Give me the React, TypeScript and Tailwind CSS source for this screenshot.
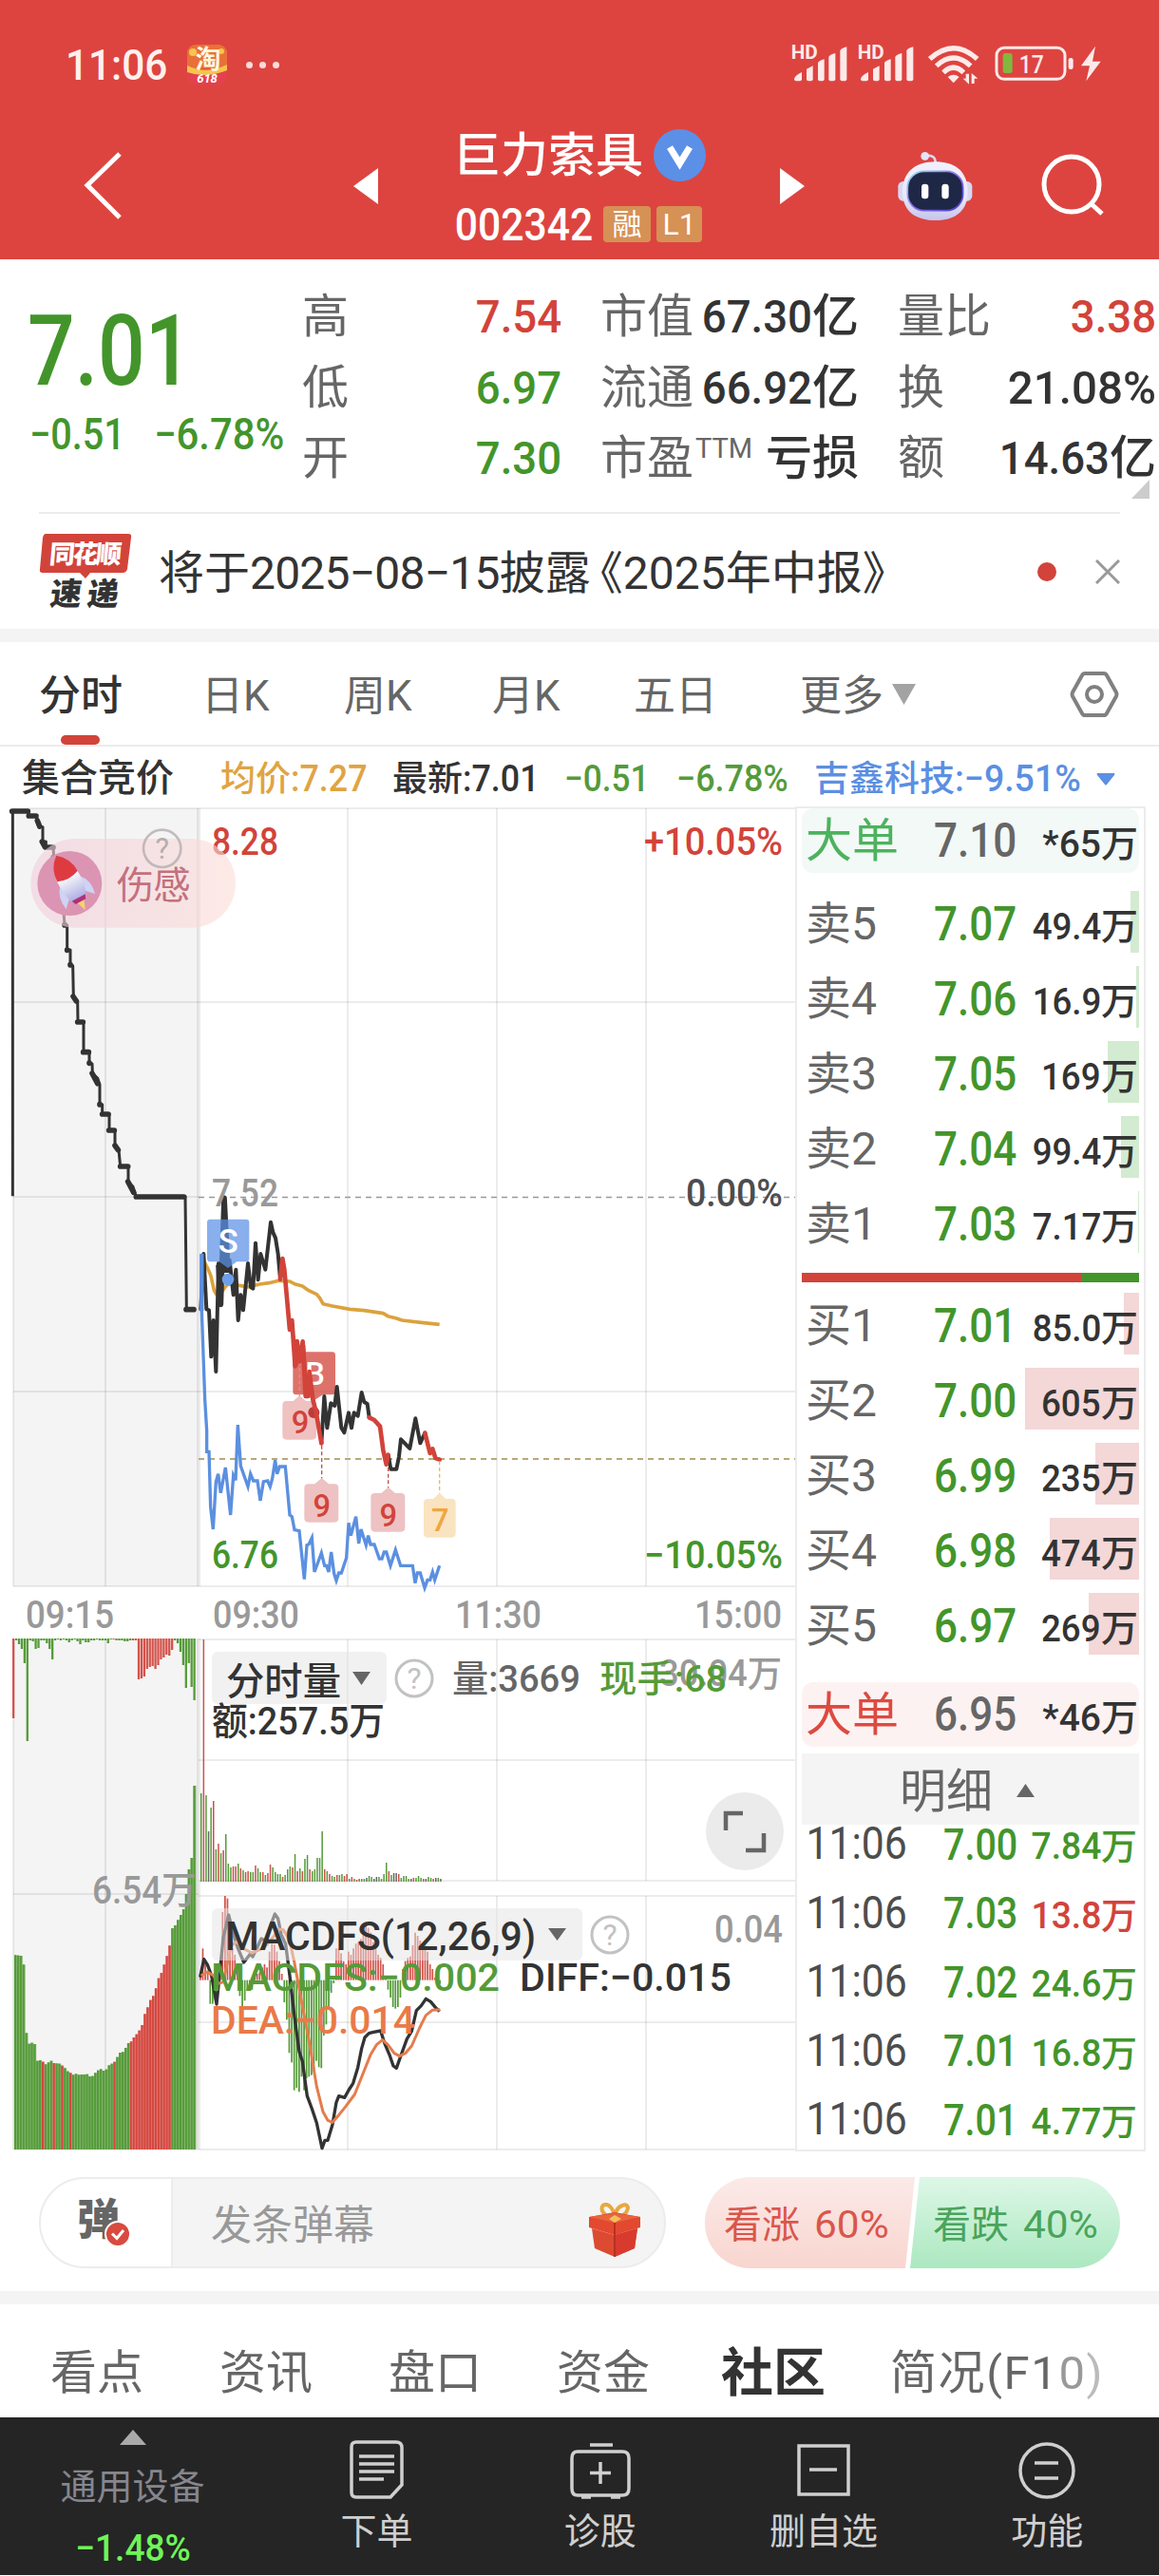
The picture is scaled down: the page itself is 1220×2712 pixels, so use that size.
import type { ReactNode } from 'react'
import clsx from 'clsx'

const GREEN = '#43952b'
const RED = '#d2433a'
const DARK = '#333333'
const GRAY = '#999999'

const stats = [
  [
    { label: '高', value: '7.54', unit: '', tone: 'text-[#d2433a]' },
    { label: '低', value: '6.97', unit: '', tone: 'text-[#43952b]' },
    { label: '开', value: '7.30', unit: '', tone: 'text-[#43952b]' },
  ],
  [
    { label: '市值', value: '67.30', unit: '亿', tone: 'text-[#333333]' },
    { label: '流通', value: '66.92', unit: '亿', tone: 'text-[#333333]' },
    { label: '市盈', sup: 'TTM', value: '', unit: '亏损', tone: 'text-[#333333]' },
  ],
  [
    { label: '量比', value: '3.38', unit: '', tone: 'text-[#d2433a]' },
    { label: '换', value: '21.08%', unit: '', tone: 'text-[#333333]' },
    { label: '额', value: '14.63', unit: '亿', tone: 'text-[#333333]' },
  ],
]

const sells = [
  { label: '卖5', price: '7.07', volume: '49.4', bar: 9 },
  { label: '卖4', price: '7.06', volume: '16.9', bar: 3 },
  { label: '卖3', price: '7.05', volume: '169', bar: 33 },
  { label: '卖2', price: '7.04', volume: '99.4', bar: 19 },
  { label: '卖1', price: '7.03', volume: '7.17', bar: 1 },
]

const buys = [
  { label: '买1', price: '7.01', volume: '85.0', bar: 16 },
  { label: '买2', price: '7.00', volume: '605', bar: 120 },
  { label: '买3', price: '6.99', volume: '235', bar: 46 },
  { label: '买4', price: '6.98', volume: '474', bar: 94 },
  { label: '买5', price: '6.97', volume: '269', bar: 53 },
]

const trades = [
  { time: '11:06', price: '7.00', volume: '7.84', up: false },
  { time: '11:06', price: '7.03', volume: '13.8', up: true },
  { time: '11:06', price: '7.02', volume: '24.6', up: false },
  { time: '11:06', price: '7.01', volume: '16.8', up: false },
  { time: '11:06', price: '7.01', volume: '4.77', up: false },
]

// Call auction: unmatched volume hanging from the top, [height, isRed]
const auctionTop: [number, number][] = [
  [84, 1], [2, 0], [6, 0], [11, 0], [26, 0], [108, 0], [2, 0], [3, 0], [11, 0], [10, 0],
  [2, 0], [2, 0], [5, 0], [11, 0], [22, 0], [2, 0], [1, 0], [2, 0], [1, 0], [2, 0],
  [4, 0], [2, 0], [1, 0], [3, 0], [6, 0], [2, 0], [4, 0], [4, 0], [2, 0], [2, 0],
  [1, 0], [2, 0], [2, 0], [2, 0], [5, 0], [1, 0], [1, 1], [2, 0], [2, 0], [2, 0],
  [3, 0], [3, 0], [2, 0], [2, 1], [2, 1], [43, 1], [42, 1], [40, 1], [32, 1], [30, 1],
  [29, 1], [32, 1], [28, 1], [22, 1], [20, 1], [17, 1], [18, 1], [12, 1], [2, 0], [5, 0],
  [14, 0], [28, 0], [52, 0], [26, 0], [51, 0], [65, 0],
]

// Call auction: matched volume, y of each bar top
const auctionMatched = [
  295, 296, 297, 325, 541, 575, 572, 576, 629, 627, 632, 640, 634, 629, 636, 637, 638, 644, 652,
  662, 667, 673, 670, 673, 672, 672, 671, 678, 677, 667, 659, 655, 660, 656, 643, 638, 632, 617,
  603, 601, 588, 573, 568, 555, 545, 533, 516, 481, 460, 437, 424, 400, 368, 351, 325, 298, 265,
  210, 201, 184, 168, 150, 102, 24, -12, -240,
]
const isMatchedRed = (i: number) => [10, 14, 17, 20, 36].includes(i) || (i >= 42 && i <= 56)

// Minute volume bars: height followed by g(reen) / r(ed) / k (flat)
const minuteVolume =
  '93g 255r 91g 53k 78g 85r 34g 40r 30g 33r 50g 19g 15g 16r 16r 19g 14r 12g 10r 11r 10g 10g 17r 14g 10g 10r 7g 9r 18r 15g 10g 8g 8g 5r 7g 13g 16g 15r 29g 11r 14g 11r 24g 28g 13r 11g 13g 25g 25g 53g 13r 11g 8r 6g 5g 7r 7g 8g 6r 8r 3g 5r 3g 2r 3r 3g 3g 4k 6g 5g 3k 5k 5g 3g 8g 20g 11r 7g 9k 9k 8r 4g 6g 6g 3g 3k 4r 4g 6g 4g 3r 3k 5g 4g 3r 4k 4g 3k'
    .split(' ')
    .map((s) => ({ h: parseInt(s, 10), c: s.slice(-1) }))

const macdBars = [
  20, 100, 60, 30, -75, -75, -60, -40, 10, 215, 266, 258, 150, 100, 80, 40, -50, -90, -65, -30, -20,
  -30, 10, 20, 25, 40, 50, 40, 90, 115, 112, 90, 60, 20, -70, -125, -230, -260, -348, -340, -353,
  -305, -348, -310, -305, -300, -290, -255, -275, -278, -175, -140, -90, -40, -10, 100, 100, 85, 60,
  50, 90, 80, 100, 115, 120, 130, 160, 178, 165, 150, 120, 100, 80, 70, 50, 5, -30, -55, -85, -90,
  -85, -55, 35, 60, 70, 75, 110, 150, 140, 125, 115, 110, 90, 50, 35, 8, -5, -12,
]

/** Narrow figures */
const Num = ({ children, className }: { children: ReactNode; className?: string }) => (
  <span className={clsx('inline-block whitespace-nowrap', className)}>{children}</span>
)

type LabelProps = {
  x: number
  y: number
  w: number
  size?: number
  fill?: string
  weight?: number
  children: string
}

/** Chart text stretched to a known width */
const Label = ({ x, y, w, size = 40, fill = GRAY, weight = 500, children }: LabelProps) => (
  <text
    x={x}
    y={y}
    textLength={w}
    lengthAdjust="spacingAndGlyphs"
    fontSize={size}
    fontWeight={weight}
    fill={fill}
  >
    {children}
  </text>
)

const StatusBar = () => (
  <div className="flex h-[136px] items-center pl-[69px] text-[#fff0ee]">
    <Num className="w-[128px] origin-left scale-x-[0.94] text-[45px] leading-none font-medium">11:06</Num>
    <svg width="42" height="42" viewBox="0 0 42 42" className="shrink-0">
      <rect width="42" height="42" rx="9" fill="#e8543a" />
      <path d="M0 9A9 9 0 0 1 9 0H33A9 9 0 0 1 42 9V28Q20 20 0 30Z" fill="#e8713a" />
      <circle cx="6" cy="8" r="4" fill="#f6c54c" />
      <circle cx="36" cy="7" r="3" fill="#f6c54c" />
      <path d="M0 27Q20 34 42 25V33A9 9 0 0 1 33 42H9A9 9 0 0 1 0 33Z" fill="#e5404f" />
      <path d="M0 22Q20 32 42 21V27Q20 36 0 29Z" fill="#f6c54c" />
      <text x="22" y="25" fontSize="27" fontWeight="700" fill="#fff6df" textAnchor="middle">淘</text>
      <text x="21" y="40" fontSize="13" fontWeight="700" fontStyle="italic" fill="#fff" textAnchor="middle">618</text>
    </svg>
    <div className="ml-[20px] flex gap-[7px]">
      <i className="size-[7px] rounded-full bg-[#fbdcda]" />
      <i className="size-[7px] rounded-full bg-[#fbdcda]" />
      <i className="size-[7px] rounded-full bg-[#fbdcda]" />
    </div>
    <svg width="330" height="44" viewBox="40 48 990 132" className="ml-[538px] shrink-0" fill="#fdeae9">
      {[0, 210].map((dx) => (
        <g key={dx} transform={`translate(${dx} 0)`}>
          <text x="42" y="97" fontSize="58" fontWeight="700" textLength="84" lengthAdjust="spacingAndGlyphs">HD</text>
          <path d="M52 160Q54 148 76 138V160Q76 166 70 166H58Q52 166 52 160Z" />
          <path d="M91 128L111 118V160Q111 166 105 166H97Q91 166 91 160Z" />
          <path d="M127 108Q130 102 147 97V160Q147 166 141 166H133Q127 166 127 160Z" />
          <path d="M161 90Q164 82 182 78V160Q182 166 176 166H167Q161 166 161 160Z" />
          <path d="M197 70Q200 62 218 58V160Q218 166 212 166H203Q197 166 197 160Z" />
        </g>
      ))}
      <g fill="none" stroke="#fdeae9" strokeWidth="16">
        <path d="M480 96Q555 28 630 96" />
        <path d="M501 118Q555 68 609 118" />
        <path d="M523 139Q555 108 587 139" />
      </g>
      <path d="M537 153Q555 140 573 153L555 172Z" />
      <path d="M594 143H604V176L585 158H594ZM612 174V141L632 158H621V174Z" />
      <rect x="691" y="61" width="216" height="99" rx="24" fill="none" stroke="#fdeae9" strokeWidth="9" />
      <rect x="711" y="78" width="30" height="63" rx="8" fill="#83b73e" />
      <text x="762" y="140" fontSize="80" fontWeight="500" textLength="78" lengthAdjust="spacingAndGlyphs">17</text>
      <rect x="918" y="93" width="15" height="36" rx="7" />
      <path d="M1003 56L958 118H985L974 166L1020 104H994Z" />
    </svg>
  </div>
)

const Robot = () => (
  <svg width="80" height="74" viewBox="368 378 240 222" className="ml-[97px] shrink-0">
    <defs>
      <linearGradient id="shell" x1="0" y1="0" x2="0" y2="1">
        <stop offset="0" stopColor="#f2f0fc" />
        <stop offset=".6" stopColor="#e9e8fa" />
        <stop offset="1" stopColor="#c6c3ec" />
      </linearGradient>
      <linearGradient id="rim" x1="0" y1="0" x2="1" y2="1">
        <stop offset="0" stopColor="#8fe0ec" />
        <stop offset=".5" stopColor="#8a6fe8" />
        <stop offset="1" stopColor="#4a3fd0" />
      </linearGradient>
    </defs>
    <path d="M458 394Q492 386 490 420" fill="none" stroke="#d9d7f3" strokeWidth="8" />
    <circle cx="457" cy="394" r="13" fill="#e6e4f8" />
    <rect x="372" y="474" width="36" height="62" rx="16" fill="#d9d8f2" />
    <rect x="570" y="474" width="36" height="62" rx="16" fill="#d9d8f2" />
    <path d="M490 412C560 412 592 450 592 506C592 570 550 597 490 597C430 597 386 570 386 506C386 450 420 412 490 412Z" fill="url(#shell)" />
    <rect x="402" y="442" width="175" height="124" rx="52" fill="#1f2747" stroke="url(#rim)" strokeWidth="5" />
    <rect x="446" y="482" width="22" height="47" rx="10" fill="#fff" />
    <rect x="510" y="482" width="22" height="47" rx="10" fill="#fff" />
  </svg>
)

const TitleBar = () => (
  <div className="flex h-[119px] items-center">
    <svg width="46" height="74" viewBox="0 0 46 74" className="ml-[86px] shrink-0" fill="none" stroke="#fff" strokeWidth="5">
      <path d="M40 3L6 36L40 70" />
    </svg>
    <svg width="26" height="38" viewBox="0 0 26 38" className="ml-[240px] shrink-0" fill="#fff">
      <path d="M26 0V38L0 19Z" />
    </svg>
    <div className="ml-[79px] flex w-[268px] flex-col gap-[27px] text-white">
      <div className="flex h-[54px] items-center gap-[11px]">
        <span className="pt-0.5 text-[50px] leading-none font-medium whitespace-nowrap">巨力索具</span>
        <svg width="55" height="55" viewBox="0 0 55 55" className="shrink-0">
          <circle cx="27.500" cy="27.500" r="27.500" fill="#5b90e6" />
          <path d="M17 19L27.500 36L38 19" fill="none" stroke="#fff" strokeWidth="7" />
        </svg>
      </div>
      <div className="flex h-[38px] items-center gap-1.5">
        <Num className="w-[152px] origin-left scale-x-[0.87] pl-[2px] text-[49px] leading-none font-medium">002342</Num>
        <span className="flex h-[38px] w-[50px] shrink-0 items-center justify-center rounded-[4px] bg-[#d69155] text-[31px] leading-none">融</span>
        <span className="flex h-[38px] w-[48px] shrink-0 items-center justify-center rounded-[4px] bg-[#d69155] text-[32px] leading-none">L1</span>
      </div>
    </div>
    <svg width="26" height="38" viewBox="0 0 26 38" className="ml-[76px] shrink-0" fill="#fff">
      <path d="M0 0V38L26 19Z" />
    </svg>
    <Robot />
    <svg width="68" height="68" viewBox="0 0 68 68" className="ml-[72px] shrink-0" fill="none" stroke="#fff" strokeWidth="5">
      <circle cx="32" cy="32" r="29" />
      <path d="M52 52L64 63" />
    </svg>
  </div>
)

const Quote = () => (
  <div className="flex h-[266px] pl-[31px]">
    <div className="w-[288px] shrink-0 pt-[53px] font-medium text-[#43952b]">
      <div className="text-[103px] leading-[88px]">
        <Num className="-ml-0.5 origin-left scale-x-[0.85]">7.01</Num>
      </div>
      <div className="mt-[19px] flex text-[46px] leading-[48px]">
        <Num className="w-[131px] origin-left scale-x-[0.86]">−0.51</Num>
        <Num className="origin-left scale-x-[0.91]">−6.78%</Num>
      </div>
    </div>
    <div className="mt-[23px] flex gap-[42px]">
      {stats.map((col, i) => (
        <div key={i} className={clsx('flex flex-col', i === 0 ? 'w-[272px]' : 'w-[271px]')}>
          {col.map((s) => (
            <div key={s.label} className="-ml-px flex h-[74.7px] items-center justify-between text-[49px] leading-none whitespace-nowrap">
              <span className="text-[#666666]">
                {s.label}
                {s.sup && <sup className="top-[-0.6em] ml-0.5 text-[29px] leading-none">{s.sup}</sup>}
              </span>
              <span className={clsx('font-medium', s.tone)}>
                <Num className={clsx('origin-right', s.value.endsWith('%') ? 'scale-x-[0.97]' : 'scale-x-[0.93]')}>{s.value}</Num>
                {s.unit}
              </span>
            </div>
          ))}
        </div>
      ))}
    </div>
  </div>
)

const Notice = () => (
  <div className="relative mx-[41px] flex h-[123px] items-center border-t-2 border-[#ececec]">
    <svg width="19" height="20" viewBox="0 0 19 20" className="absolute top-[-36px] right-[-31px]" fill="#ccc">
      <path d="M19 0V20H0Z" />
    </svg>
    <svg width="98" height="80" viewBox="0 0 98 80" className="shrink-0 overflow-visible">
      <path d="M7 0H94Q98 0 97 4L93 37Q92 41 88 41H54L49 47L43 41H4Q0 41 1 37L4 4Q5 0 7 0Z" fill="#d2433a" />
      <text x="11" y="31" fontSize="27" fontWeight="900" fill="#fff" textLength="76" transform="skewX(-5) translate(2 0)">同花顺</text>
      <text x="12" y="75" fontSize="33" fontWeight="900" fill="#333" textLength="72" transform="skewX(-7) translate(8 0)">速递</text>
    </svg>
    <p className="ml-[28px] pt-1 text-[48px] leading-none whitespace-nowrap text-[#333333]">
      将于
      <span className="tracking-[-0.8px]">2025−08−15</span>
      披露<span className="-ml-[14px]">《2025年中报》</span>
    </p>
    <i className="absolute right-[67px] size-[20px] rounded-full bg-[#d2433a]" />
    <svg width="26" height="26" viewBox="0 0 26 26" className="absolute right-0" stroke="#999" strokeWidth="3">
      <path d="M1 1L25 25M25 1L1 25" />
    </svg>
  </div>
)

const PeriodTabs = () => (
  <div className="relative h-[110px] border-b-2 border-[#ececec] text-[44px] leading-[114px] text-[#666666]">
    <div className="grid grid-cols-[171px_150px_156px_149px_175px_1fr] pl-[41px]">
      <span className="font-medium text-[#333333]">分时</span>
      <span>日K</span>
      <span>周K</span>
      <span>月K</span>
      <span>五日</span>
      <span className="flex items-center">
        更多
        <svg width="25" height="22" viewBox="0 0 25 22" className="mb-1 ml-[9px]" fill="#a3a3a3">
          <path d="M0 0H25L12.500 22Z" />
        </svg>
      </span>
    </div>
    <i className="absolute bottom-0 left-[64px] h-[10px] w-[41px] rounded-full bg-[#d2433a]" />
    <svg width="54" height="52" viewBox="0 0 54 52" className="absolute top-[29px] right-[41px]" fill="none" stroke="#808080" strokeWidth="4">
      <path d="M17 4H37Q39 4 40 6L50 24Q51 26 50 28L40 46Q39 48 37 48H17Q15 48 14 46L4 28Q3 26 4 24L14 6Q15 4 17 4Z" />
      <circle cx="27" cy="26" r="8" />
    </svg>
  </div>
)

const InfoRow = () => (
  <div className="grid h-[63px] grid-cols-[209px_181px_181px_118px_145px_1fr] items-center pt-[5px] pl-[23px] text-[37px] leading-none font-medium whitespace-nowrap text-[#333333]">
    <span className="text-[40px]">集合竞价</span>
    <span className="text-[#dfa443]">均价<Num className="origin-left scale-x-[0.92] text-[39px]">:7.27</Num></span>
    <span>最新<Num className="origin-left scale-x-[0.92] text-[39px]">:7.01</Num></span>
    <Num className="origin-left scale-x-[0.9] text-[39px] text-[#559a3a]">−0.51</Num>
    <Num className="origin-left scale-x-[0.92] text-[39px] text-[#559a3a]">−6.78%</Num>
    <span className="flex items-center text-[#5b8fe2]">
      吉鑫科技<Num className="w-[149px] origin-left scale-x-[0.96] text-[39px]">:−9.51%</Num>
      <svg width="20" height="13" viewBox="0 0 20 13" fill="#5b8fe2">
        <path d="M1 0H19Q20 1 19 2L11 12Q10 13 9 12L1 2Q0 1 1 0Z" />
      </svg>
    </span>
  </div>
)

const HelpIcon = ({ cx, cy }: { cx: number; cy: number }) => (
  <g>
    <circle cx={cx} cy={cy} r="19" fill="none" stroke="#c2c2c2" strokeWidth="3" />
    <text x={cx} y={cy + 11} fontSize="32" fill="#c2c2c2" textAnchor="middle">?</text>
  </g>
)

const Grid = () => (
  <g stroke="#000" strokeOpacity=".075" strokeWidth="2">
    <rect x="14" y="851" width="195" height="819" fill="#f4f4f4" stroke="none" />
    <rect x="14" y="1725" width="195" height="539" fill="#f4f4f4" stroke="none" />
    <path d="M14 851H837M14 1670H837M209 1726H837M209 1980H837M209 1996H837M209 2263H837" />
    <path d="M14 1055H837M14 1260H209M14 1465H837M209 1853H837M209 2129H837M14 1994H209" />
    <path d="M14 851V1670M111 851V1670M14 1725V2263M111 1725V2263" />
    <path d="M209 851V1670M209 1725V2263" strokeWidth="4" />
    <path d="M366 851V1670M523 851V1670M680 851V1670" />
    <path d="M366 1726V1980M523 1726V1980M680 1726V1980M366 1996V2263M523 1996V2263M680 1996V2263" />
  </g>
)

const PriceChart = () => (
  <g strokeLinejoin="round" fill="none">
    <path d="M209 1260.500H837" stroke={GRAY} strokeWidth="1.500" strokeDasharray="6 5" />
    <path d="M209 1536H837" stroke="#b9a878" strokeWidth="1.800" strokeDasharray="6 5" />

    {/* call auction steps */}
    <g transform="translate(0 840) scale(.33333)" stroke={DARK} strokeWidth="9">
      <path d="M40 1258V42H88L92 57H115L118 75L125 90L135 92V138H145V156H168L170 185L188 190L204 400L212 402V480H222V528L230 530L232 627L245 642L246 707H264V803H282V837L291 840L292 870L308 885L315 905V968H323V998H345V1049H363V1098L375 1112L380 1164H405V1212L420 1228L430 1260H585L589 1616" />
      <path
        d="M38 42H88M91 57H114M118 72L125 90M133 138L143 156H168M168 188H186M204 400V402M212 480V481M222 527V528M231 627L241 642M245 708H262M263 803H280M282 837V838M291 870L308 902M315 968V969M323 999H342M344 1050H361M363 1098L373 1112M380 1164H404M404 1212L422 1246M430 1260H581M588 1616H612"
        strokeWidth="17"
        strokeLinecap="round"
      />
    </g>

    <g transform="translate(190 1240) scale(.33333)">
      {/* buy point sits below the price line */}
      <path d="M365 550H479Q489 550 489 560V675Q489 685 479 685H450L422 703L395 685H365Q355 685 355 675V560Q355 550 365 550Z" fill={RED} fillOpacity=".75" />
      <text x="425" y="655" fontSize="98" fontWeight="500" fill="#fff" textAnchor="middle">B</text>
      <path d="M376 580V690" stroke="#e58a86" strokeWidth="4" strokeDasharray="12 8" />
      <path d="M376 687L396 705H416Q429 705 429 718V814Q429 827 416 827H335Q322 827 322 814V718Q322 705 335 705H356Z" fill="#e9a7a6" fillOpacity=".7" />
      <circle cx="421" cy="741" r="18" fill="#bb3d38" />

      <path d="M70 255L86 286L96 310L106 355L113 368L130 360L145 340L155 335L175 338L213 345L250 336L280 332L310 325L345 327L360 335L385 342L405 356L430 368L440 380L450 398L480 405L535 415L580 419L640 428L655 437L680 443L700 450L760 457L818 463" stroke="#dba23d" strokeWidth="11" />
      <path d="M64 415L73 240L82 415L90 418L97 565L104 450L112 612L120 270L127 400L138 64L150 290L155 260L167 370L175 290L182 450L190 370L198 418L213 270L222 345L229 350L237 206L245 322L253 240L268 290L285 140L292 172L300 190L308 240L315 320M445 838L454 690L463 790L475 712L487 720L494 660L508 790L517 805L531 742L540 790L548 742L560 752L572 678L580 708L590 714L596 757M656 875L664 920H682L690 880L696 826L708 838L724 855L742 760L757 838L772 806" stroke={DARK} strokeWidth="12" strokeLinecap="round" />
      <path d="M120 275L127 400L138 64L147 240V300" stroke={DARK} strokeWidth="17" />
      <path d="M315 320L322 255L328 290L345 480L352 450L362 595L368 516L376 580L386 517L395 690H402L407 612L418 700L428 740L445 838M596 757L612 765L630 785L640 860L650 905L656 875M772 806L788 870L796 856L805 885L818 890" stroke={RED} strokeWidth="14" strokeLinecap="round" />
      <path d="M356 500L366 590L388 530L398 680" stroke={RED} strokeWidth="12" />
      <path d="M67 240V420L77 700L83 800V865H90L95 1040L103 1110L112 960L119 935L127 995L142 915L158 1065L167 940L174 955L181 780L190 910L213 975L221 935L230 957H243L252 1020L262 960L275 957L283 975L290 950L299 892L305 935L313 912H331L345 1065L352 1070L360 1112L375 1115L391 1268L399 1160L405 1158L415 1137L423 1245L445 1185L455 1225H461L468 1245L476 1182L485 1250L492 1272L500 1248H508L524 1200L531 1090L538 1130L554 1070L563 1155L570 1110L586 1160L593 1130L600 1158H612L628 1203H636L643 1182H650L663 1225L679 1175L695 1225H733L741 1280L748 1248H757L771 1295L780 1270H788L796 1245L803 1270L818 1225" stroke="#5b90e0" strokeWidth="10" strokeLinejoin="miter" />
      <path d="M67 240V420" stroke="#5b90e0" strokeWidth="13" />

      <path d="M94 131H207Q217 131 217 141V255Q217 265 207 265H178L150 285L122 265H94Q84 265 84 255V141Q84 131 94 131Z" fill="#5b90e5" fillOpacity=".72" />
      <text x="151" y="236" fontSize="104" fill="#fff" fontWeight="500" textAnchor="middle">S</text>
      <circle cx="150" cy="321" r="19" fill="#6c9eea" />

      <g strokeWidth="4" strokeDasharray="12 8">
        <path d="M446 845V950M656 915V980" stroke="#c0504c" />
        <path d="M818 895V998" stroke="#edb55c" />
      </g>
      <path d="M446 948L468 967H486Q499 967 499 980V1075Q499 1088 486 1088H404Q391 1088 391 1075V980Q391 967 404 967H424Z" fill="#eec2c2" />
      <path d="M656 977L678 996H696Q709 996 709 1009V1105Q709 1118 696 1118H614Q601 1118 601 1105V1009Q601 996 614 996H634Z" fill="#eec2c2" />
      <path d="M818 995L838 1014H856Q869 1014 869 1027V1123Q869 1136 856 1136H781Q768 1136 768 1123V1027Q768 1014 781 1014H798Z" fill="#fae3c0" />
      <g fontSize="98" fontWeight="500" textAnchor="middle" fill={RED}>
        <text x="378" y="808">9</text>
        <text x="446" y="1070">9</text>
        <text x="656" y="1100">9</text>
        <text x="820" y="1117" fill="#eda740">7</text>
      </g>
    </g>

    <Label x={223} y={900} w={70} fill={RED}>8.28</Label>
    <Label x={678} y={900} w={146} fill={RED}>+10.05%</Label>
    <Label x={223} y={1270} w={70}>7.52</Label>
    <Label x={722} y={1270} w={102} fill="#4d4d4d">0.00%</Label>
    <Label x={223} y={1651} w={70} fill={GREEN}>6.76</Label>
    <Label x={678} y={1651} w={146} fill={GREEN}>−10.05%</Label>
    <Label x={27} y={1714} w={93}>09:15</Label>
    <Label x={224} y={1714} w={91}>09:30</Label>
    <Label x={479} y={1714} w={91}>11:30</Label>
    <Label x={731} y={1714} w={92}>15:00</Label>
  </g>
)

const MoodBadge = () => (
  <g transform="translate(0 840) scale(.33333)">
    <defs>
      <linearGradient id="mood">
        <stop offset="0" stopColor="#f2cddc" />
        <stop offset="1" stopColor="#fbdcd6" />
      </linearGradient>
      <linearGradient id="rocket" x1="0" y1="0" x2="0" y2="1">
        <stop offset="0" stopColor="#ffffff" />
        <stop offset="1" stopColor="#a9a9e0" />
      </linearGradient>
    </defs>
    <rect x="97" y="129" width="647" height="281" rx="140" fill="url(#mood)" fillOpacity=".6" />
    <circle cx="220" cy="270" r="102" fill="#dc94b3" />
    <g transform="rotate(-28 220 262)">
      <path d="M206 325L220 368L236 325Z" fill="#f6d36a" />
      <path d="M186 262Q160 290 168 336L192 312ZM254 262Q282 290 272 336L248 312Z" fill="#cfd3f4" />
      <path d="M184 240Q180 290 196 330H244Q262 290 256 240Z" fill="url(#rocket)" />
      <path d="M184 246Q184 200 220 172Q256 200 257 246Q220 262 184 246Z" fill="#de3b41" />
      <path d="M196 322H244L238 336H202Z" fill="#b0307c" />
    </g>
    <circle cx="512" cy="160" r="59" fill="none" stroke="#b5aeae" strokeOpacity=".8" strokeWidth="8" />
    <text x="512" y="192" fontSize="92" fill="#b5aeae" textAnchor="middle">?</text>
    <text x="368" y="318" fontSize="118" fill="#c4707d" textLength="234">伤感</text>
  </g>
)

const VolumeChart = () => (
  <g>
    {auctionTop.map(([h, red], i) => (
      <rect key={i} x={13 + i * 2.93} y="1725" width="2.300" height={h} fill={red ? '#d4534b' : '#559b39'} />
    ))}
    {auctionMatched.map((y, i) => (
      <g key={i} fill={isMatchedRed(i) ? '#d4473f' : '#559b39'}>
        <rect x={15 + i * 2.9} y={1960 + y / 3} width="2.900" height={303 - y / 3} fillOpacity=".75" />
        <rect x={15 + i * 2.9} y={1960 + y / 3} width="2" height={303 - y / 3} />
      </g>
    ))}
    {minuteVolume.map(({ h, c }, i) => (
      <rect
        key={i}
        x={211 + i * 2.6}
        y={1981 - h}
        width="1.500"
        height={h}
        fill={c === 'r' ? '#c9524c' : c === 'g' ? '#559b39' : '#666666'}
      />
    ))}

    <rect x="223" y="1739" width="184" height="55" rx="6" fill="#e5e5e5" fillOpacity=".52" />
    <Label x={238} y={1784} w={121} fill={DARK}>分时量</Label>
    <path d="M371 1760H390L380.500 1774Z" fill="#666" />
    <HelpIcon cx={436} cy={1767} />
    <Label x={476} y={1781} w={135} size={39} fill="#666666">量:3669</Label>
    <Label x={694} y={1775} w={129} size={38}>30.04万</Label>
    <Label x={631} y={1781} w={134} size={39} fill="#559b39">现手:68</Label>
    <Label x={223} y={1826} w={182} fill={DARK}>额:257.5万</Label>
    <Label x={97} y={2004} w={110}>6.54万</Label>

    <circle cx="784" cy="1928" r="41" fill="#ebebeb" />
    <path d="M764 1927V1909H782M785 1948H804V1930" fill="none" stroke="#666" strokeWidth="4.500" />
  </g>
)

const MacdChart = () => (
  <g>
    <g transform="translate(210 1980) scale(.33333)" fill="none" strokeLinejoin="round">
      {macdBars.map((v, i) => (
        <rect
          key={i}
          x={i * 7.8}
          y={v > 0 ? 314 - v : 314}
          width="5.200"
          height={Math.abs(v)}
          fill={v > 0 ? '#d4534b' : '#559b39'}
        />
      ))}
      <path d="M2 305L14 248L25 265L38 300L54 390L62 310L75 180L92 108L105 160L120 210L140 258L160 232L168 240L180 215L195 183L210 190L225 140L238 105L248 120L258 170L272 200L285 300L300 430L315 540L325 570L340 680L355 720L370 765L387 845L396 820H405L420 770L432 700L440 680L458 685L472 660L485 640L500 590L512 530L522 495L535 482L550 478L572 474L585 515L600 550L612 585L622 592L635 555L655 500L670 475L685 410L700 395L715 373L730 382L745 400L758 413" stroke={DARK} strokeWidth="10" />
      <path d="M5 300L25 288L45 300L60 325L75 320L88 260L100 205L118 193L140 215L165 228L190 218L215 200L235 175L250 153L265 155L285 190L300 260L320 370L345 500L370 650L390 730L405 757L420 763L440 740L460 715L490 675L520 600L540 550L560 517L578 503L595 518L615 545L632 554L650 545L670 522L695 465L715 425L735 409L760 407" stroke="#e57c4c" strokeWidth="9" />
    </g>
    <rect x="223" y="2009" width="390" height="55" rx="6" fill="#e5e5e5" fillOpacity=".52" />
    <Label x={237} y={2053} w={327} size={42} fill={DARK}>MACDFS(12,26,9)</Label>
    <path d="M577 2030H596L586.500 2043Z" fill="#666" />
    <HelpIcon cx={642} cy={2037} />
    <Label x={752} y={2045} w={72}>0.04</Label>
    <Label x={222} y={2096} w={304} size={41} fill="#559b39">MACDFS:−0.002</Label>
    <Label x={547} y={2096} w={223} size={41} fill={DARK}>DIFF:−0.015</Label>
    <Label x={222} y={2141} w={215} size={41} fill="#e97a49">DEA:−0.014</Label>
  </g>
)

type BookRowProps = { label: string; price: string; volume: string; bar: number; sell?: boolean }

const BookRow = ({ label, price, volume, bar, sell }: BookRowProps) => (
  <div className="relative flex h-[79px] items-center pt-[4px] leading-none">
    <i
      className={clsx('absolute top-[7px] right-0 h-[65px]', sell ? 'bg-[#d3ebd0]' : 'bg-[#f4d7d7]')}
      style={{ width: bar }}
    />
    <span className="relative w-[139px] pl-[4px] text-[48px] text-[#666666]">{label}</span>
    <Num className="relative origin-left scale-x-[0.88] text-[50px] font-medium text-[#43952b]">{price}</Num>
    <span className="absolute top-[26px] right-[1px] text-[39px] font-medium whitespace-nowrap text-[#333333]">
      <Num className="origin-right scale-x-[0.94]">{volume}</Num>万
    </span>
  </div>
)

const BigOrder = ({ price, volume, sell }: { price: string; volume: string; sell?: boolean }) => (
  <div className={clsx('relative flex h-[68px] items-center rounded-[12px] leading-none', sell ? 'bg-[#f2f9f6]' : 'bg-[#fdf2f2]')}>
    <span className={clsx('w-[139px] pl-[4px] text-[49px]', sell ? 'text-[#4db25e]' : 'text-[#dd4a40]')}>大单</span>
    <Num className="origin-left scale-x-[0.88] text-[50px] font-medium text-[#666666]">{price}</Num>
    <span className="absolute top-[19px] right-[1px] text-[39px] font-medium whitespace-nowrap text-[#333333]">
      <Num className="origin-right">*{volume}</Num>万
    </span>
  </div>
)

const OrderBook = () => (
  <div className="h-[1416px] w-[369px] shrink-0 border-2 border-[#ececec] px-[5px]">
    <BigOrder price="7.10" volume="65" sell />
    <div className="mt-[12px]">
      {sells.map((r) => (
        <BookRow key={r.label} {...r} sell />
      ))}
    </div>
    <div className="mt-[14px] flex h-[10px]">
      <i className="w-[294px] bg-[#d2433a]" />
      <i className="flex-1 bg-[#43952b]" />
    </div>
    <div className="mt-[4px]">
      {buys.map((r) => (
        <BookRow key={r.label} {...r} />
      ))}
    </div>
    <div className="mt-[22px]">
      <BigOrder price="6.95" volume="46" />
    </div>
    <div className="mt-[7px] flex h-[75px] items-center bg-[#f4f4f4] pt-[6px] pl-[103px] text-[49px] leading-none text-[#666666]">
      明细
      <svg width="19" height="14" viewBox="0 0 19 14" className="mb-1 ml-[25px]" fill="#666">
        <path d="M0 14H19L9.500 0Z" />
      </svg>
    </div>
    <div className="-mt-[16px] leading-none">
      {trades.map((t, i) => (
        <div key={i} className="relative flex h-[72.500px] items-center font-medium">
          <Num className="w-[149px] origin-left scale-x-[0.89] pl-[5px] text-[48px] font-normal text-[#4d4d4d]">{t.time}</Num>
          <Num className="origin-left scale-x-[0.84] text-[47px] text-[#43952b]">{t.price}</Num>
          <span className={clsx('absolute top-[20px] right-[2px] text-[38px] whitespace-nowrap', t.up ? 'text-[#d2433a]' : 'text-[#43952b]')}>
            <Num className="origin-right scale-x-[0.98]">{t.volume}</Num>万
          </span>
        </div>
      ))}
    </div>
  </div>
)

const Gift = () => (
  <svg width="56" height="58" viewBox="0 0 56 58" className="ml-auto" fill="none">
    <path d="M28 17C8 12 14-2 22 3C27 7 28 12 28 17C28 12 30 5 36 3C44-1 46 12 28 17Z" stroke="#e8a83c" strokeWidth="4" />
    <path d="M4 27L28 34L52 27L49 48L28 57L7 48Z" fill="#dc4a32" />
    <path d="M28 34L52 27L49 48L28 57Z" fill="#d93a2e" />
    <path d="M1 15L28 10L55 15V26L28 34L1 26Z" fill="#e2492f" />
    <path d="M1 15L28 21L55 15L28 11Z" fill="#e8653f" />
    <path d="M28 21V57" stroke="#b9301f" strokeWidth="2" />
    <path d="M22 17L28 13L35 17L28 21Z" fill="#f2bf57" />
  </svg>
)

const BarrageBar = () => (
  <div className="flex h-[147px] items-start px-[41px] pt-[27px]">
    <div className="flex h-[96px] w-[660px] overflow-hidden rounded-full border-2 border-[#ececec] bg-[#f4f4f4]">
      <div className="relative w-[139px] border-r-2 border-[#ececec] bg-white pl-[38px] text-[45px] leading-[88px] font-black text-[#666666]">
        弹
        <svg width="28" height="28" viewBox="0 0 28 28" className="absolute top-[44px] left-[67px]">
          <circle cx="14" cy="14" r="13" fill="#d94a3f" stroke="#fff" strokeWidth="2" />
          <path d="M8 13.500L13 18.500L20 10" fill="none" stroke="#fff" strokeWidth="3" />
        </svg>
      </div>
      <div className="flex flex-1 items-center pr-[24px] pl-[40px] text-[43px] leading-none text-[#999999]">
        <span className="pt-[6px]">发条弹幕</span>
        <div className="ml-auto pt-[16px]">
          <Gift />
        </div>
      </div>
    </div>
    <div className="relative ml-[41px] flex h-[96px] w-[437px] overflow-hidden rounded-full bg-linear-to-b from-[#ddf7e7] to-[#abe8c0] text-[40px] leading-[102px] whitespace-nowrap">
      <svg width="226" height="96" viewBox="0 0 226 96" className="absolute top-0 left-0">
        <defs>
          <linearGradient id="bull" x1="0" y1="0" x2="0" y2="1">
            <stop offset="0" stopColor="#fbeae8" />
            <stop offset="1" stopColor="#f9d5cf" />
          </linearGradient>
        </defs>
        <path d="M0 0H226L216 96H0Z" fill="#fff" />
        <path d="M0 0H221L211 96H0Z" fill="url(#bull)" />
      </svg>
      <span className="relative w-[220px] pl-[20px] text-[#d9564b]">看涨 <Num className="ml-[5px] origin-left scale-x-[1.06]">60%</Num></span>
      <span className="relative pl-[20px] text-[#4aa45c]">看跌 <Num className="ml-[5px] origin-left scale-x-[1.06]">40%</Num></span>
    </div>
  </div>
)

const SectionTabs = () => (
  <div className="grid h-[119px] grid-cols-[178px_178px_177px_173px_178px_1fr] items-center pt-[25px] pl-[53px] text-[49px] leading-none whitespace-nowrap text-[#666666]">
    <span>看点</span>
    <span>资讯</span>
    <span>盘口</span>
    <span>资金</span>
    <span className="text-[55px] font-bold text-[#333333]">社区</span>
    <span className="tracking-[1.6px]">简况(F1<span className="text-[#999999]">0</span><span className="text-[#bbbbbb]">)</span></span>
  </div>
)

const navItems = [
  {
    label: '下单',
    icon: <path d="M8 3H50Q56 3 56 9V48L44 61H8Q3 61 3 56V8Q3 3 8 3ZM11 18H48M11 26H48M11 34H48M11 42H37" />,
  },
  {
    label: '诊股',
    icon: <path d="M6 13H53Q60 13 60 20V52Q60 59 53 59H6Q0 59 0 52V20Q0 13 6 13ZM30 24V47M19 35.500H41M19 6H43M10 61H20M41 61H51" />,
  },
  { label: '删自选', icon: <path d="M4 7H56V58H4ZM15 32H44" /> },
  { label: '功能', icon: <path d="M58 33A28 28 0 1 1 2 33A28 28 0 1 1 58 33M17 25H42M17 41H42" /> },
]

const BottomNav = () => (
  <div className="flex h-[166px] bg-[#252525] text-[38px] leading-none text-[#cfcfcf]">
    <div className="flex w-[279px] flex-col items-center pt-[13px]">
      <svg width="28" height="16" viewBox="0 0 28 16" fill="#aaa">
        <path d="M0 16H28L14 0Z" />
      </svg>
      <span className="mt-[25px] text-[#85868e]">通用设备</span>
      <Num className="mt-[27px] scale-x-[0.95] text-[39px] font-medium text-[#6ff558]">−1.48%</Num>
    </div>
    {navItems.map((n) => (
      <div key={n.label} className="flex flex-1 flex-col items-center pt-[23px]">
        <svg width="64" height="64" viewBox="-2 0 64 64" fill="none" stroke="#cfcfcf" strokeWidth="3.500">
          {n.icon}
        </svg>
        <span className="mt-[14px]">{n.label}</span>
      </div>
    ))}
  </div>
)

const App = () => (
  <div className="flex h-[2712px] w-[1220px] flex-col overflow-hidden bg-white font-[Roboto,'Noto_Sans_CJK_SC',sans-serif]">
    <header className="h-[273px] shrink-0 bg-[#dd4440]">
      <StatusBar />
      <TitleBar />
    </header>
    <Quote />
    <Notice />
    <div className="h-[14px] shrink-0 bg-[#f4f4f4]" />
    <PeriodTabs />
    <InfoRow />
    <div className="flex">
      <svg width="837" height="1416" viewBox="0 849 837 1416" className="shrink-0">
        <Grid />
        <PriceChart />
        <MoodBadge />
        <VolumeChart />
        <MacdChart />
      </svg>
      <OrderBook />
    </div>
    <BarrageBar />
    <div className="h-[14px] shrink-0 bg-[#f4f4f4]" />
    <SectionTabs />
    <BottomNav />
  </div>
)

export default App
